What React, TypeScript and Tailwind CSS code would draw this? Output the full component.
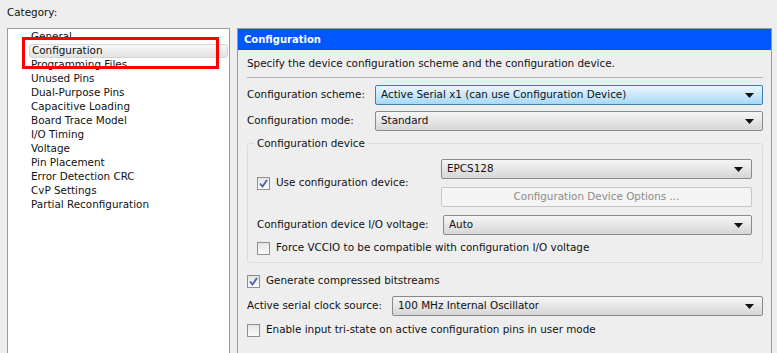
import React from "react"

const font = { fontFamily: '"DejaVu Sans", Verdana, sans-serif' }

const categories = [
  "General",
  "Configuration",
  "Programming Files",
  "Unused Pins",
  "Dual-Purpose Pins",
  "Capacitive Loading",
  "Board Trace Model",
  "I/O Timing",
  "Voltage",
  "Pin Placement",
  "Error Detection CRC",
  "CvP Settings",
  "Partial Reconfiguration",
]

function Arrow() {
  return (
    <svg width="9" height="5" viewBox="0 0 9 5" className="shrink-0">
      <path d="M0 0 H9 L4.5 5 Z" fill="#111" />
    </svg>
  )
}

function Combo({ value, active, className = "" }: { value: string; active?: boolean; className?: string }) {
  return (
    <div
      className={`flex items-center justify-between h-[20px] pl-[5px] pr-[8px] rounded-[2px] border text-[#111] ${
        active
          ? "border-[#3c7fb1] bg-gradient-to-b from-[#eaf6fd] to-[#a7d9f5]"
          : "border-[#8a8a8a] bg-gradient-to-b from-[#f6f6f6] to-[#d6d6d6]"
      } ${className}`}
    >
      <span className="truncate">{value}</span>
      <Arrow />
    </div>
  )
}

function Check({ checked, label }: { checked?: boolean; label: string }) {
  return (
    <div className="flex items-center gap-[6px] h-[16px]">
      <div className="w-[13px] h-[13px] border border-[#8f8f8f] bg-gradient-to-b from-[#e4e4e4] to-[#fbfbfb] flex items-center justify-center shrink-0">
        {checked && (
          <svg width="9" height="9" viewBox="0 0 9 9">
            <path d="M1 4.5 L3.5 7.5 L8 1" fill="none" stroke="#4a5fa8" strokeWidth="1.8" />
          </svg>
        )}
      </div>
      <span>{label}</span>
    </div>
  )
}

export default function App() {
  return (
    <div className="w-[777px] h-[353px] overflow-hidden bg-[#eeeeee] text-[10.4px] text-[#111] relative flex flex-col" style={font}>
      <div className="h-[28px] pl-[7px] pt-[5px]">Category:</div>

      <div className="flex flex-1 gap-[7px] pl-[7px] min-h-0">
        {/* category tree */}
        <div className="w-[223px] bg-white border border-[#9c9c9c] border-b-0 pt-px">
          {categories.map((c) => (
            <div key={c} className="h-[14px] pr-px flex items-center">
              <div
                className={`flex-1 ml-[21px] h-[14px] flex items-center pl-[2px] rounded-[3px] ${
                  c === "Configuration" ? "bg-gradient-to-b from-[#f8f8f8] to-[#e2e2e2] border border-[#d4d4d4]" : ""
                }`}
              >
                {c}
              </div>
            </div>
          ))}
        </div>

        {/* settings panel */}
        <div className="w-[535px] border border-[#9c9c9c] border-b-0 flex flex-col">
          <div className="h-[21px] bg-[#0057fd] text-white font-bold pl-[6px] flex items-center text-[10px]">
            Configuration
          </div>

          <div className="px-[9px] pr-[8px] flex flex-col">
            <div className="h-[27px] flex items-center pt-px">
              Specify the device configuration scheme and the configuration device.
            </div>
            <div className="h-px bg-[#b4b4b4] mb-[7px]" />

            <div className="flex items-center h-[20px]">
              <span className="w-[128px]">Configuration scheme:</span>
              <Combo value="Active Serial x1 (can use Configuration Device)" active className="flex-1" />
            </div>
            <div className="flex items-center h-[20px] mt-[6px]">
              <span className="w-[128px]">Configuration mode:</span>
              <Combo value="Standard" className="flex-1" />
            </div>

            {/* group box */}
            <div className="relative mt-[12px] h-[120px] border border-[#d3dde3] rounded-[3px] pl-[9px] pr-[10px] pt-[15px]">
              <div className="absolute -top-[7px] left-[6px] px-[3px] bg-[#eeeeee] leading-[13px]">Configuration device</div>
              <div className="flex">
                <div className="w-[184px] flex items-center">
                  <Check checked label="Use configuration device:" />
                </div>
                <div className="flex-1 flex flex-col gap-[8px]">
                  <Combo value="EPCS128" />
                  <div className="h-[20px] rounded-[2px] border border-[#c6c6c6] bg-[#f4f4f4] flex items-center justify-center text-[#8c8c8c]">
                    Configuration Device Options ...
                  </div>
                </div>
              </div>
              <div className="flex items-center mt-[8px]">
                <span className="w-[186px] whitespace-nowrap">Configuration device I/O voltage:</span>
                <Combo value="Auto" className="flex-1" />
              </div>
              <div className="mt-[5px]">
                <Check label="Force VCCIO to be compatible with configuration I/O voltage" />
              </div>
            </div>

            <div className="mt-[10px]">
              <Check checked label="Generate compressed bitstreams" />
            </div>
            <div className="flex items-center h-[20px] mt-[7px]">
              <span className="w-[145px] whitespace-nowrap">Active serial clock source:</span>
              <Combo value="100 MHz Internal Oscillator" className="flex-1" />
            </div>
            <div className="mt-[6px]">
              <Check label="Enable input tri-state on active configuration pins in user mode" />
            </div>
          </div>
        </div>
      </div>

      {/* red annotation */}
      <div className="absolute left-[22px] top-[37px] w-[197px] h-[32px] border-[3px] border-[#ff0000]" />
    </div>
  )
}
